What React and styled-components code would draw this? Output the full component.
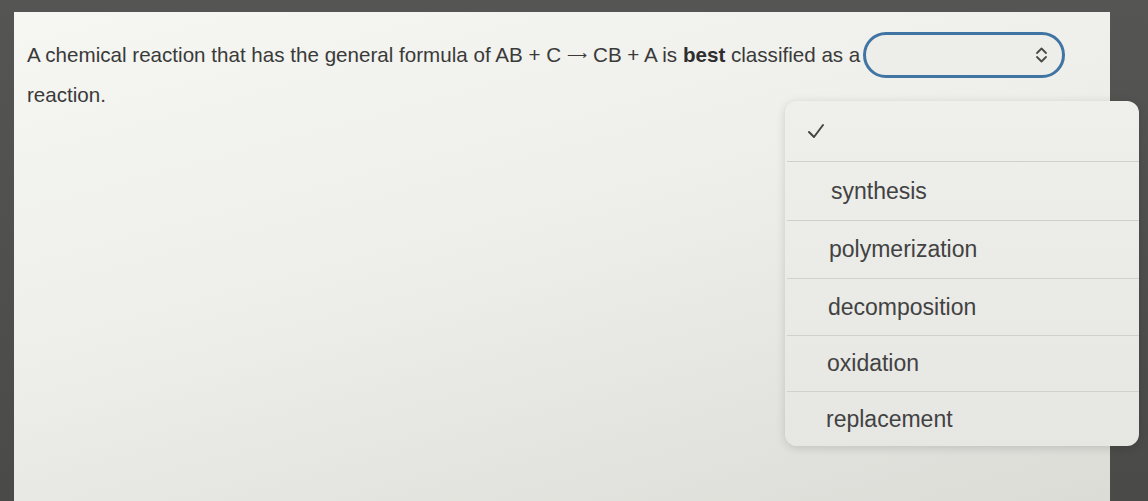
import React from "react";
import styled, { createGlobalStyle } from "styled-components";

const Global = createGlobalStyle`
  html, body { margin: 0; padding: 0; }
  body {
    width: 1148px; height: 501px; overflow: hidden;
    background: linear-gradient(180deg, #555553 0%, #4a4a48 100%);
    font-family: "Liberation Sans", Arial, sans-serif;
  }
`;

const Screen = styled.div`
  position: relative;
  width: 1148px;
  height: 501px;
  display: flex;
  padding: 12px 38px 0 14px;
  box-sizing: border-box;
`;

const Panel = styled.main`
  flex: 1;
  background: linear-gradient(165deg, #f6f6f2 0%, #eeeeea 45%, #dcdcd7 100%);
  padding: 24px 0 0 13px;
  box-sizing: border-box;
`;

const Question = styled.p`
  margin: 0;
  font-size: 20.6px;
  line-height: 38px;
  color: #3a3a3a;
  width: 1080px;
`;

const Bold = styled.b`
  font-weight: 700;
  color: #2e2e2e;
`;

const Arrow = styled.span`
  font-size: 14px;
  margin: 0 6px;
  position: relative;
  top: -2px;
`;

const Select = styled.span`
  display: inline-flex;
  align-items: center;
  justify-content: flex-end;
  vertical-align: middle;
  width: 182px;
  height: 40px;
  margin: -10px 0 -6px 3px;
  border: 3px solid #3f74a3;
  border-radius: 24px;
  background: #ededea;
  padding-right: 14px;
  box-sizing: content-box;
`;

const Menu = styled.ul`
  position: absolute;
  left: 785px;
  top: 101px;
  width: 354px;
  margin: 0;
  padding: 0;
  list-style: none;
  background: linear-gradient(180deg, #efefec 0%, #e6e6e3 100%);
  border-radius: 12px;
  box-shadow: 0 2px 10px rgba(0, 0, 0, 0.15);
  overflow: hidden;
`;

const Option = styled.li`
  height: ${(p) => p.$h}px;
  display: flex;
  align-items: center;
  padding-left: ${(p) => p.$pad}px;
  font-size: 23px;
  color: #424242;
  border-top: ${(p) => (p.$first ? "none" : "1.5px solid #d0d0cd")};
  margin-left: 2px;
  box-sizing: border-box;
`;

const Chevron = () => (
  <svg width="13" height="18" viewBox="0 0 13 18" fill="none" stroke="#4a4a4a" strokeWidth="1.8" strokeLinecap="round" strokeLinejoin="round">
    <path d="M2 7 L6.5 2.5 L11 7" />
    <path d="M2 11 L6.5 15.5 L11 11" />
  </svg>
);

const Check = () => (
  <svg width="18" height="16" viewBox="0 0 18 16" fill="none" stroke="#444" strokeWidth="2" strokeLinecap="round" strokeLinejoin="round">
    <path d="M2 9 L7 14 L16 2" />
  </svg>
);

const options = [
  { label: "synthesis", h: 59, pad: 44 },
  { label: "polymerization", h: 58, pad: 42 },
  { label: "decomposition", h: 57, pad: 41 },
  { label: "oxidation", h: 56, pad: 40 },
  { label: "replacement", h: 55, pad: 39 },
];

export default function App() {
  return (
    <>
      <Global />
      <Screen>
        <Panel>
          <Question>
            A chemical reaction that has the general formula of AB + C<Arrow>⟶</Arrow>CB + A is <Bold>best</Bold> classified as a
            <Select>
              <Chevron />
            </Select>
            <br />
            reaction.
          </Question>
        </Panel>
        <Menu>
          <Option $first $pad={20} $h={60}>
            <Check />
          </Option>
          {options.map((o) => (
            <Option key={o.label} $h={o.h} $pad={o.pad}>
              {o.label}
            </Option>
          ))}
        </Menu>
      </Screen>
    </>
  );
}
